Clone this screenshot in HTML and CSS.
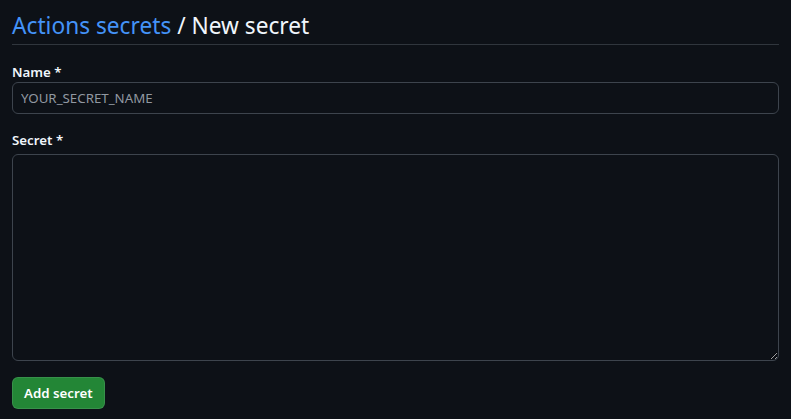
FILE: index.html
```html
<!DOCTYPE html>
<html>
<head>
<meta charset="utf-8">
<link rel="stylesheet" href="styles.css">
</head>
<body>
<div class="page">
  <h1 class="title"><a class="crumb" href="#">Actions secrets</a> / New secret</h1>
  <form class="form">
    <div class="group">
      <label class="label" for="name">Name *</label>
      <input class="input" id="name" type="text" placeholder="YOUR_SECRET_NAME">
    </div>
    <div class="group group-secret">
      <label class="label" for="secret">Secret *</label>
      <textarea class="textarea" id="secret"></textarea>
    </div>
    <button class="btn" type="button">Add secret</button>
  </form>
</div>
</body>
</html>
```
FILE: styles.css
```css
html, body { margin: 0; padding: 0; background: #0d1117; }
body { font-family: "Noto Sans", "Open Sans", sans-serif; color: #e6edf3; }
.page { padding: 8px 12px 0 12px; }
.title { margin: 0; font-size: 22.7px; font-weight: 400; line-height: 36px; border-bottom: 1px solid #30363d; padding-bottom: 0; color: #f0f6fc; }
.crumb { color: #4493f8; text-decoration: none; }
.form { display: flex; flex-direction: column; align-items: flex-start; }
.group { width: 100%; display: flex; flex-direction: column; margin-top: 17px; }
.group + .group { margin-top: 16px; }
.label { font-size: 13.3px; font-weight: 600; line-height: 20px; margin-bottom: 0; color: #f0f6fc; }
.group-secret .label { margin-bottom: 4px; }
.input, .textarea { box-sizing: border-box; width: 100%; background: #0d1117; border: 1px solid #3d444d; border-radius: 6px; color: #f0f6fc; font-family: inherit; font-size: 13.3px; padding: 5px 8px; outline: none; }
.input { height: 32px; }
.input::placeholder { color: #9198a1; }
.textarea { height: 207px; resize: vertical; }
.btn { margin-top: 16px; height: 32px; padding: 0 11px; background: #238636; color: #fff; border: 1px solid rgba(240,246,252,0.1); border-radius: 6px; font-family: inherit; font-size: 13.3px; font-weight: 600; }
```
